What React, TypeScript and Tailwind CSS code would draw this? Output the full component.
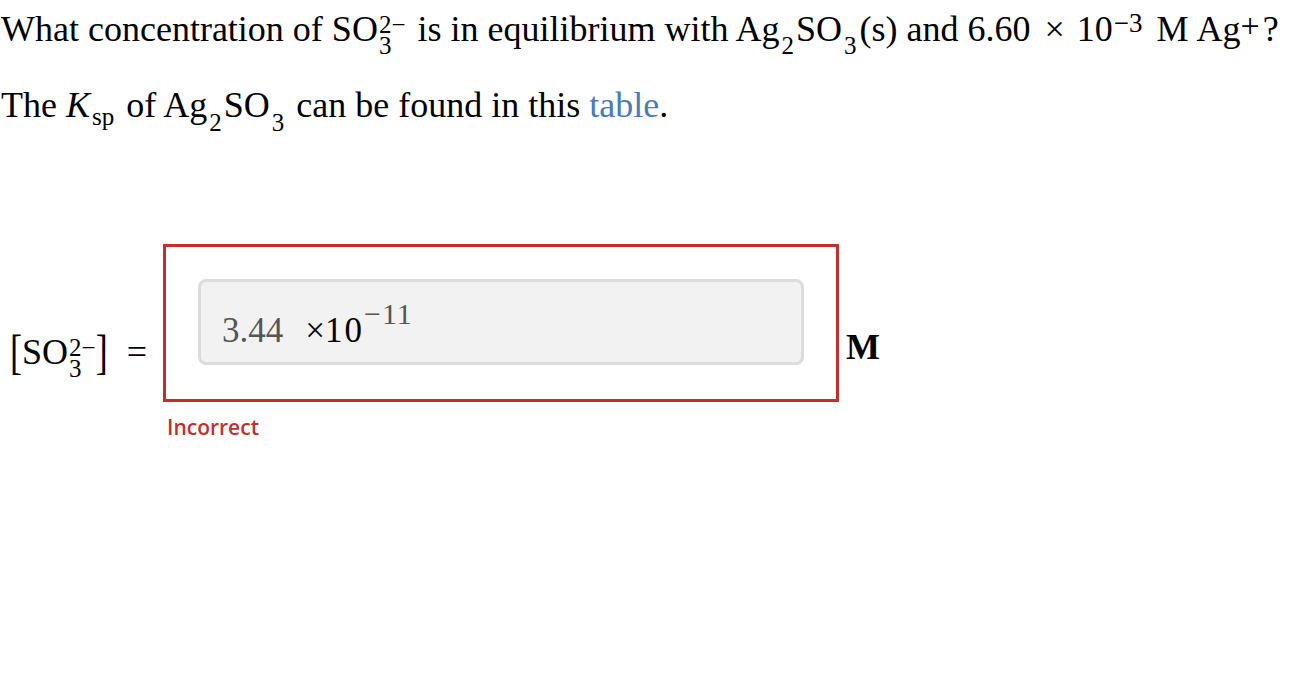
import React from "react";

// stacked charge over subscript, e.g. SO3 2−
function Stack({ sup, sub }: { sup: string; sub: string }) {
  return (
    <span className="inline-flex flex-col align-[8px] text-[25px] leading-[21px] ml-[1px]">
      <span>{sup}</span>
      <span>{sub}</span>
    </span>
  );
}

function Sub({ children, drop = "line1" }: { children: React.ReactNode; drop?: "line1" | "line2" | "k" }) {
  const cls =
    drop === "line2" ? "align-[-14px]" : drop === "k" ? "align-[-8px]" : "align-[-13px]";
  return <span className={`text-[25px] leading-none mx-[2px] ${cls}`}>{children}</span>;
}

export default function App() {
  return (
    <div className="min-h-screen bg-white text-black font-['Liberation_Serif',serif]">
      <div className="pl-[1px] pt-[7px] text-[36px] leading-[44px]">
        <p className="h-[44px] whitespace-nowrap">
          What concentration of SO<Stack sup="2−" sub="3" />
          <span className="ml-[12px]">is in equilibrium with Ag</span>
          <Sub>2</Sub>SO<Sub>3</Sub>
          <span className="ml-[1px]">(s) and 6.60</span>
          <span className="ml-[14px]">×</span>
          <span className="ml-[12px]">10</span>
          <span className="text-[27px] leading-none align-[9px] ml-[1px]">−3</span>
          <span className="ml-[14px]">M</span>
          <span className="ml-[8px]">Ag</span>
          <span className="text-[34px] leading-none align-[4px]">+</span>
          <span className="ml-[3px]">?</span>
        </p>
        <p className="mt-[32px] h-[44px] whitespace-nowrap">
          The <i>K</i>
          <Sub drop="k">sp</Sub>
          <span className="ml-[10px]">of Ag</span>
          <Sub drop="line2">2</Sub>SO<Sub drop="line2">3</Sub>
          <span className="ml-[10px]">can be found in this </span>
          <span className="text-[#4a7ab8]">table</span>.
        </p>
      </div>

      <div className="mt-[117px] flex items-start">
        <div className="ml-[10px] mt-[86px] w-[153px] whitespace-nowrap text-[36px] leading-[44px]">
          <span className="inline-block scale-y-[1.35]">[</span>SO<Stack sup="2−" sub="3" />
          <span className="inline-block scale-y-[1.35]">]</span>
          <span className="ml-[19px]">=</span>
        </div>
        <div className="flex flex-col">
          <div className="w-[676px] h-[158px] border-[3px] border-[#c1302f] p-[32px]">
            <div className="h-[86px] rounded-[8px] border-[3px] border-[#dcdcdc] bg-[#f2f2f2] pl-[21px] pt-[10px] text-[35px] leading-[44px] whitespace-nowrap">
              <span className="text-[#555]">3.44</span>
              <span className="ml-[22px]">×</span>
              <span className="tracking-[2px]">10</span>
              <span className="text-[#555] text-[30px] tracking-[1px] align-[18px]">−11</span>
            </div>
          </div>
          <div className="ml-[4px] mt-[10px] text-[21px] font-semibold text-[#c1302f] font-['Open_Sans',sans-serif]">
            Incorrect
          </div>
        </div>
        <div className="ml-[7px] mt-[81px] text-[36px] font-bold leading-[44px]">M</div>
      </div>
    </div>
  );
}
